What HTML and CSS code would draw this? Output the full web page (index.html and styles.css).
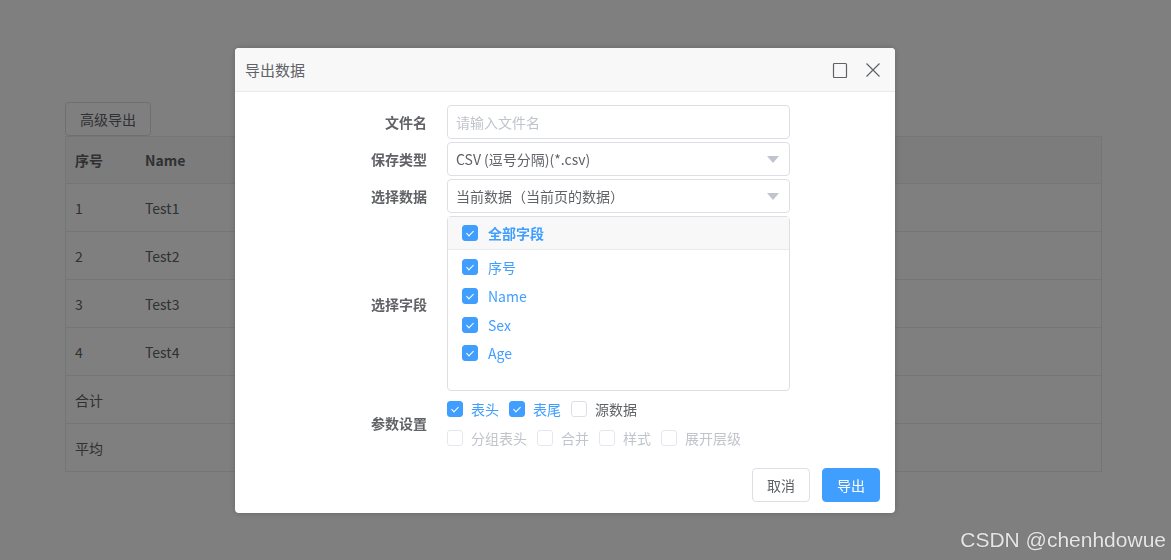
FILE: index.html
```html
<!DOCTYPE html>
<html>
<head>
<meta charset="utf-8">
<title>导出数据</title>
<link rel="stylesheet" href="styles.css">
</head>
<body>
<div class="page">
  <button class="btn">高级导出</button>
  <div class="grid">
    <div class="grid-row grid-head">
      <div class="c1">序号</div><div class="c2">Name</div><div class="c3">Sex</div><div class="c4">Age</div>
    </div>
    <div class="grid-row"><div class="c1">1</div><div class="c2">Test1</div><div class="c3">男</div><div class="c4">28</div></div>
    <div class="grid-row"><div class="c1">2</div><div class="c2">Test2</div><div class="c3">女</div><div class="c4">22</div></div>
    <div class="grid-row"><div class="c1">3</div><div class="c2">Test3</div><div class="c3">男</div><div class="c4">32</div></div>
    <div class="grid-row"><div class="c1">4</div><div class="c2">Test4</div><div class="c3">女</div><div class="c4">24</div></div>
    <div class="grid-row"><div class="c1">合计</div></div>
    <div class="grid-row"><div class="c1">平均</div></div>
  </div>
</div>

<div class="mask">
  <div class="modal">
    <div class="modal-header">
      <span class="modal-title">导出数据</span>
      <span class="modal-icons">
        <svg width="16" height="16" viewBox="0 0 16 16"><rect x="1.5" y="1.5" width="13" height="14" rx="1" fill="none" stroke="#606266" stroke-width="1.2"/></svg>
        <svg width="16" height="16" viewBox="0 0 16 16"><path d="M1.5 1.5 L14.5 14.5 M14.5 1.5 L1.5 14.5" stroke="#606266" stroke-width="1.2" fill="none"/></svg>
      </span>
    </div>
    <div class="modal-body">
      <div class="form-row">
        <label class="form-label">文件名</label>
        <div class="input placeholder">请输入文件名</div>
      </div>
      <div class="form-row">
        <label class="form-label">保存类型</label>
        <div class="input select">CSV (逗号分隔)(*.csv)<i class="arrow"></i></div>
      </div>
      <div class="form-row">
        <label class="form-label">选择数据</label>
        <div class="input select">当前数据（当前页的数据）<i class="arrow"></i></div>
      </div>
      <div class="form-row field-row">
        <label class="form-label">选择字段</label>
        <div class="panel">
          <div class="panel-head"><span class="cb on"></span><span class="cb-text blue bold">全部字段</span></div>
          <div class="panel-list">
            <div class="panel-item"><span class="cb on"></span><span class="cb-text blue">序号</span></div>
            <div class="panel-item"><span class="cb on"></span><span class="cb-text blue">Name</span></div>
            <div class="panel-item"><span class="cb on"></span><span class="cb-text blue">Sex</span></div>
            <div class="panel-item"><span class="cb on"></span><span class="cb-text blue">Age</span></div>
          </div>
        </div>
      </div>
      <div class="form-row param-row">
        <label class="form-label">参数设置</label>
        <div class="params">
          <div class="param-line">
            <span class="opt"><span class="cb on"></span><span class="opt-text blue">表头</span></span>
            <span class="opt"><span class="cb on"></span><span class="opt-text blue">表尾</span></span>
            <span class="opt"><span class="cb"></span><span class="opt-text">源数据</span></span>
          </div>
          <div class="param-line">
            <span class="opt disabled"><span class="cb"></span><span class="opt-text">分组表头</span></span>
            <span class="opt disabled"><span class="cb"></span><span class="opt-text">合并</span></span>
            <span class="opt disabled"><span class="cb"></span><span class="opt-text">样式</span></span>
            <span class="opt disabled"><span class="cb"></span><span class="opt-text">展开层级</span></span>
          </div>
        </div>
      </div>
    </div>
    <div class="modal-footer">
      <button class="btn">取消</button>
      <button class="btn primary">导出</button>
    </div>
  </div>
</div>

<div class="watermark">CSDN @chenhdowue</div>
</body>
</html>
```

FILE: styles.css
```css
body{
	margin: 0;
	background: #fff;
	font-family: "Noto Sans CJK SC", "Noto Sans", sans-serif;
	font-size: 14px;
	color: #606266;
}
.page{
	padding: 102px 0 0 65px;
	width: 1037px;
}
.btn{
	height: 34px;
	padding: 0 14px;
	border: 1px solid #dcdfe6;
	border-radius: 4px;
	background: #fff;
	color: #606266;
	font-family: inherit;
	font-size: 14px;
}
.page .btn{
	display: block;
	width: 86px;
	padding: 0;
}
.grid{
	border: 1px solid #e8eaec;
}
.grid-row{
	display: flex;
	align-items: center;
	height: 48px;
	border-bottom: 1px solid #e8eaec;
	box-sizing: border-box;
}
.grid-row:last-child{
	border-bottom: none;
	height: 47px;
}
.grid-head{
	height: 47px;
	background: #f8f8f9;
	font-weight: bold;
}
.grid-row div{
	padding: 0 9px;
	box-sizing: border-box;
}
.c1{ width: 70px; }
.c2{ width: 180px; }
.c3{ width: 300px; }
.c4{ flex: 1; }

.mask{
	position: fixed;
	left: 0; top: 0; right: 0; bottom: 0;
	background: rgba(0,0,0,0.5);
}
.modal{
	margin: 48px 0 0 235px;
	width: 660px;
	height: 465px;
	background: #fff;
	border-radius: 4px;
	box-shadow: 0 0 6px rgba(0,0,0,0.2);
	display: flex;
	flex-direction: column;
	box-sizing: border-box;
}
.modal-header{
	height: 44px;
	display: flex;
	align-items: center;
	justify-content: space-between;
	padding: 0 14px 0 10px;
	background: #f8f8f9;
	border-bottom: 1px solid #e8eaec;
	border-radius: 4px 4px 0 0;
	box-sizing: border-box;
}
.modal-title{
	font-size: 15px;
	color: #606266;
}
.modal-icons{
	display: flex;
	gap: 17px;
	padding-top: 1px;
}
.modal-body{
	flex: 1;
	padding-top: 13px;
}
.form-row{
	display: flex;
	align-items: center;
	margin-bottom: 3px;
}
.form-label{
	width: 192px;
	padding-right: 20px;
	text-align: right;
	font-weight: bold;
	color: #606266;
	flex-shrink: 0;
}
.input{
	width: 343px;
	height: 34px;
	box-sizing: border-box;
	border: 1px solid #dcdfe6;
	border-radius: 4px;
	padding: 0 8px;
	display: flex;
	align-items: center;
	justify-content: space-between;
	color: #606266;
}
.placeholder{
	color: #c0c4cc;
}
.arrow{
	width: 0;
	height: 0;
	border-left: 6px solid transparent;
	border-right: 6px solid transparent;
	border-top: 7px solid #c0c4cc;
	margin-right: 2px;
}
.field-row{
	margin-top: 1px;
}
.panel{
	width: 343px;
	height: 175px;
	box-sizing: border-box;
	border: 1px solid #dcdfe6;
	border-radius: 4px;
}
.panel-head{
	height: 33px;
	display: flex;
	align-items: center;
	padding-left: 14px;
	background: #f8f8f9;
	border-bottom: 1px solid #e8eaec;
	box-sizing: border-box;
}
.panel-list{
	padding-top: 3px;
}
.panel-item{
	height: 28.7px;
	display: flex;
	align-items: center;
	padding-left: 14px;
}
.cb{
	position: relative;
	display: inline-block;
	width: 16px;
	height: 16px;
	box-sizing: border-box;
	border: 1px solid #dcdfe6;
	border-radius: 3px;
	background: #fff;
	flex-shrink: 0;
}
.cb.on{
	background: #409eff;
	border-color: #409eff;
}
.cb.on::after{
	content: "";
	position: absolute;
	left: 5px;
	top: 3px;
	width: 3px;
	height: 6px;
	border: solid #fff;
	border-width: 0 1.5px 1.5px 0;
	transform: rotate(45deg);
}
.cb-text{
	margin-left: 10px;
}
.blue{
	color: #409eff;
}
.bold{
	font-weight: bold;
}
.param-row{
	margin-top: 2px;
}
.param-line{
	height: 29px;
	display: flex;
	align-items: center;
}
.opt{
	display: flex;
	align-items: center;
	margin-right: 10px;
}
.opt-text{
	margin-left: 8px;
}
.opt.disabled .cb{
	background: #fff;
	border-color: #e4e7ed;
}
.opt.disabled .opt-text{
	color: #c0c4cc;
}
.modal-footer{
	display: flex;
	justify-content: flex-end;
	gap: 12px;
	padding: 0 15px 11px 0;
}
.modal-footer .btn{
	width: 58px;
	padding: 0;
}
.btn.primary{
	background: #409eff;
	border-color: #409eff;
	color: #fff;
}
.watermark{
	position: fixed;
	right: 5px;
	bottom: 8px;
	font-family: "Liberation Sans", Arial, sans-serif;
	font-size: 21px;
	color: #e6e6e6;
	text-shadow: 0 0 1px rgba(0,0,0,0.3);
}
```
